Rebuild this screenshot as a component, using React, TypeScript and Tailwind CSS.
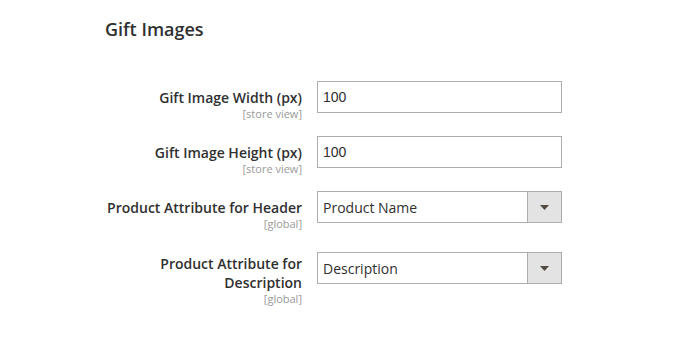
import React from 'react';

const font = { fontFamily: '"Open Sans", "Noto Sans", sans-serif' };

type Row = {
  label: string;
  scope: string;
  kind: 'input' | 'select';
  value: string;
  rowClass: string;
  controlClass?: string;
};

const rows: Row[] = [
  { label: 'Gift Image Width (px)', scope: '[store view]', kind: 'input', value: '100', rowClass: 'mt-[40px]' },
  { label: 'Gift Image Height (px)', scope: '[store view]', kind: 'input', value: '100', rowClass: 'mt-[16px]' },
  { label: 'Product Attribute for Header', scope: '[global]', kind: 'select', value: 'Product Name', rowClass: 'mt-[16px]' },
  {
    label: 'Product Attribute for Description',
    scope: '[global]',
    kind: 'select',
    value: 'Description',
    rowClass: 'mt-[16.5px]',
    controlClass: 'mt-[5.5px]',
  },
];

function Control({ row }: { row: Row }) {
  if (row.kind === 'input') {
    return (
      <div className="h-[32px] w-[245px] border border-[#adadad] bg-white flex items-center px-[5px]">
        <span className="text-[14px] text-[#303030]" style={{ fontFamily: '"Liberation Sans", Arial, sans-serif' }}>
          {row.value}
        </span>
      </div>
    );
  }
  return (
    <div className="h-[32px] w-[245px] border border-[#adadad] bg-white flex">
      <div className="flex-1 flex items-center px-[5px] text-[14px] text-[#303030]">{row.value}</div>
      <div className="w-[34px] bg-[#e3e3e3] border-l border-[#adadad] flex items-center justify-center">
        <svg width="9" height="5" viewBox="0 0 9 5">
          <polygon points="0,0 9,0 4.5,5" fill="#514943" />
        </svg>
      </div>
    </div>
  );
}

export default function App() {
  return (
    <div className="w-[685px] h-[350px] bg-white overflow-hidden" style={font}>
      <div className="pl-[102px] pt-[17px]">
        <h2 className="pl-[3px] text-[18px] leading-[24px] font-semibold text-[#303030]">Gift Images</h2>
        {rows.map(row => (
          <div key={row.label} className={`flex items-start ${row.rowClass}`}>
            <div className="w-[200px] pt-[7px] text-right">
              <div className="text-[14px] leading-[19px] font-semibold text-[#303030]">{row.label}</div>
              <div className="text-[11px] leading-[13px] text-[#999999]">{row.scope}</div>
            </div>
            <div className={`ml-[15px] ${row.controlClass ?? ''}`}>
              <Control row={row} />
            </div>
          </div>
        ))}
      </div>
    </div>
  );
}
